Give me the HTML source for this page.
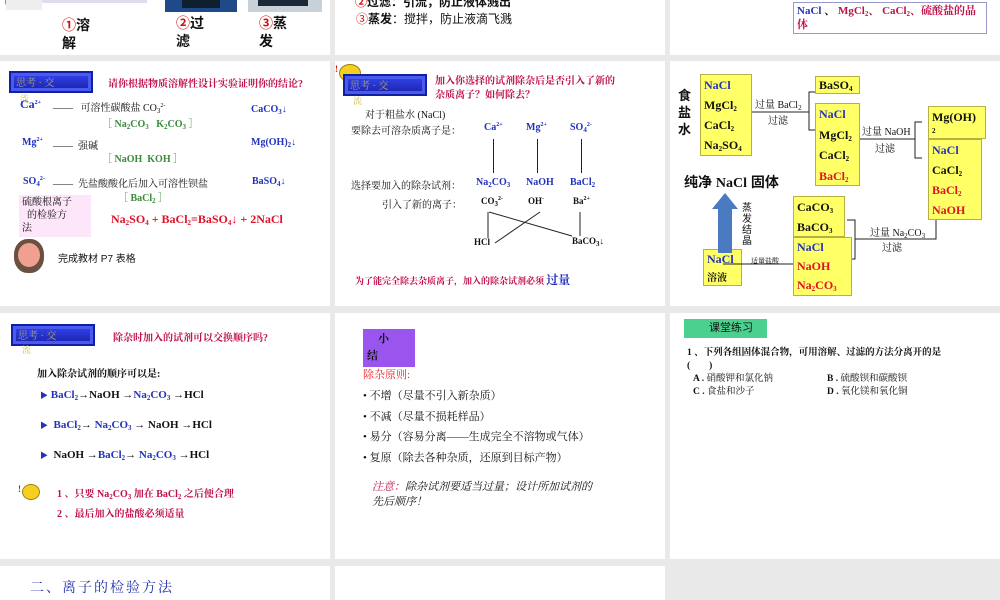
<!DOCTYPE html>
<html><head><meta charset="utf-8"><style>
*{margin:0;padding:0;box-sizing:border-box}
body{width:1000px;height:600px;background:#e9e9e9;position:relative;overflow:hidden;font-family:"Liberation Serif","Noto Serif CJK SC",serif;font-size:10px;color:#111}
.s{position:absolute;background:#fff;overflow:hidden}
.a{position:absolute;white-space:nowrap}
.b{font-weight:bold}
.bl{color:#2233bb}
.mg{color:#c0104a}
.gr{color:#3a8a3a}
.rd{color:#e0102a}
.sans{font-family:"Liberation Sans","Noto Sans CJK SC",sans-serif}
.badge{position:absolute;width:84px;height:22px;background:linear-gradient(180deg,#3344ee,#1a22aa);border:2px solid #1020a0;box-shadow:inset 0 0 0 3px #4a5af0}
.badge span{position:absolute;left:5px;top:1px;color:#c8c060;font-size:10px;opacity:.8}
.yb{position:absolute;background:#ffff66;border:1px solid #b8b040;font-weight:bold;font-size:12px;line-height:20px;padding-left:3px;overflow:hidden}
sub{font-size:7px;vertical-align:-2px;line-height:0}
sup{font-size:6px;vertical-align:4px;line-height:0}
.ln{position:absolute;background:#222}
</style></head><body>

<!-- Row1 col1 -->
<div class="s" style="left:0;top:0;width:330px;height:55px">
  <div class="a" style="left:5px;top:-6px;width:20px;height:16px;border:1px solid #888;border-radius:50%"></div>
  <div class="a" style="left:6px;top:0;width:36px;height:10px;background:#eee"></div>
  <div class="a" style="left:42px;top:0;width:105px;height:3px;background:#dde"></div>
  <div class="a" style="left:165px;top:0;width:72px;height:12px;background:#1e4a8a"></div>
  <div class="a" style="left:182px;top:0;width:38px;height:8px;background:#0e2030"></div>
  <div class="a" style="left:248px;top:0;width:74px;height:12px;background:#c8d0d8"></div>
  <div class="a" style="left:258px;top:0;width:50px;height:6px;background:#1a2838"></div>
  <div class="a b sans" style="left:62px;top:16px;font-size:14px;line-height:18px"><span style="color:#d01010">①</span>溶<br>解</div>
  <div class="a b sans" style="left:176px;top:14px;font-size:14px;line-height:18px"><span style="color:#d01010">②</span>过<br>滤</div>
  <div class="a b sans" style="left:259px;top:14px;font-size:14px;line-height:18px"><span style="color:#d01010">③</span>蒸<br>发</div>
</div>

<!-- Row1 col2 -->
<div class="s" style="left:335px;top:0;width:330px;height:55px">
  <div class="a b sans" style="left:20px;top:-7px;font-size:12px"><span style="color:#d01010">②</span>过滤：引流，防止液体溅出</div>
  <div class="a sans" style="left:21px;top:10px;font-size:12px"><span style="color:#d01010">③</span><b>蒸发</b>：搅拌，防止液滴飞溅</div>
</div>

<!-- Row1 col3 -->
<div class="s" style="left:670px;top:0;width:330px;height:55px">
  <div class="a b" style="left:123px;top:2px;width:194px;height:32px;border:1px solid #9999cc;padding:1px 3px;font-size:11px;line-height:14px;white-space:normal"><span class="bl">NaCl</span> 、 <span class="mg">MgCl<sub>2</sub>、 CaCl<sub>2</sub>、硫酸盐的晶体</span></div>
</div>

<!-- Row2 col1 -->
<div class="s" style="left:0;top:61px;width:330px;height:245px">
  <div class="badge" style="left:9px;top:10px"><span>思考 · 交</span></div>
  <div class="a" style="left:20px;top:31px;color:#d0c050;font-size:9px">流</div>
  <div class="a b mg" style="left:108px;top:14px;font-size:10px">请你根据物质溶解性设计实验证明你的结论?</div>
  <div class="a b bl" style="left:20px;top:36px;font-size:12px">Ca<sup>2+</sup></div>
  <div class="a" style="left:53px;top:38px">——&nbsp;&nbsp; 可溶性碳酸盐 CO<sub>3</sub><sup>2-</sup></div>
  <div class="a b gr" style="left:102px;top:54px">［ Na<sub>2</sub>CO<sub>3</sub>&nbsp;&nbsp; K<sub>2</sub>CO<sub>3</sub> ］</div>
  <div class="a b bl" style="left:251px;top:43px">CaCO<sub>3</sub>↓</div>
  <div class="a b bl" style="left:22px;top:76px">Mg<sup>2+</sup></div>
  <div class="a" style="left:53px;top:76px">——&nbsp; 强碱</div>
  <div class="a b gr" style="left:102px;top:89px">［ NaOH&nbsp; KOH ］</div>
  <div class="a b bl" style="left:251px;top:76px">Mg(OH)<sub>2</sub>↓</div>
  <div class="a b bl" style="left:23px;top:115px">SO<sub>4</sub><sup>2-</sup></div>
  <div class="a" style="left:53px;top:114px">——&nbsp; 先盐酸酸化后加入可溶性钡盐</div>
  <div class="a b gr" style="left:118px;top:128px">［ BaCl<sub>2</sub> ］</div>
  <div class="a b bl" style="left:252px;top:115px">BaSO<sub>4</sub>↓</div>
  <div class="a" style="left:19px;top:134px;width:72px;height:42px;background:#fde6fa;white-space:normal;line-height:13px;padding:1px 3px">硫酸根离子<br>&nbsp;&nbsp;的检验方<br>法</div>
  <div class="a b rd" style="left:111px;top:151px;font-size:12px">Na<sub>2</sub>SO<sub>4</sub> + BaCl<sub>2</sub>=BaSO<sub>4</sub>↓ + 2NaCl</div>
  <div class="a" style="left:14px;top:178px;width:30px;height:34px;border-radius:45%;background:#6a5040"></div>
  <div class="a" style="left:18px;top:182px;width:22px;height:24px;border-radius:50%;background:#f0a090"></div>
  <div class="a sans" style="left:58px;top:189px;font-size:10px">完成教材 P7 表格</div>
</div>

<!-- Row2 col2 -->
<div class="s" style="left:335px;top:61px;width:330px;height:245px">
  <div class="a" style="left:4px;top:3px;width:22px;height:18px;border-radius:50%;background:#f5d020;border:1px solid #a08010"></div>
  <div class="a b" style="left:0;top:3px;color:#d01010;font-size:9px">!</div>
  <div class="badge" style="left:8px;top:13px"><span>思考 · 交</span></div>
  <div class="a" style="left:18px;top:33px;color:#d0c050;font-size:9px">流</div>
  <div class="a b mg" style="left:100px;top:14px;line-height:14px">加入你选择的试剂除杂后是否引入了新的<br>杂质离子？如何除去？</div>
  <div class="a" style="left:30px;top:45px">对于粗盐水 (NaCl)</div>
  <div class="a" style="left:16px;top:61px">要除去可溶杂质离子是：</div>
  <div class="a b bl" style="left:149px;top:61px">Ca<sup>2+</sup></div>
  <div class="a b bl" style="left:191px;top:61px">Mg<sup>2+</sup></div>
  <div class="a b bl" style="left:235px;top:61px">SO<sub>4</sub><sup>2-</sup></div>
  <div class="ln" style="left:158px;top:78px;width:1px;height:34px"></div>
  <div class="ln" style="left:202px;top:78px;width:1px;height:34px"></div>
  <div class="ln" style="left:246px;top:78px;width:1px;height:34px"></div>
  <div class="a" style="left:16px;top:116px">选择要加入的除杂试剂：</div>
  <div class="a b bl" style="left:141px;top:116px">Na<sub>2</sub>CO<sub>3</sub></div>
  <div class="a b bl" style="left:191px;top:116px">NaOH</div>
  <div class="a b bl" style="left:235px;top:116px">BaCl<sub>2</sub></div>
  <div class="a" style="left:47px;top:135px">引入了新的离子：</div>
  <div class="a b" style="left:146px;top:135px;font-size:9px">CO<sub>3</sub><sup>2-</sup></div>
  <div class="a b" style="left:193px;top:135px;font-size:9px">OH<sup>-</sup></div>
  <div class="a b" style="left:238px;top:135px;font-size:9px">Ba<sup>2+</sup></div>
  <svg class="a" style="left:0;top:0" width="330" height="245"><g stroke="#222" stroke-width="1" fill="none">
    <line x1="153" y1="151" x2="153" y2="177"/><line x1="154" y1="151" x2="237" y2="175"/>
    <line x1="205" y1="151" x2="160" y2="182"/><line x1="245" y1="151" x2="245" y2="175"/></g></svg>
  <div class="a b" style="left:139px;top:176px;font-size:9px">HCl</div>
  <div class="a b" style="left:237px;top:175px;font-size:9px">BaCO<sub>3</sub>↓</div>
  <div class="a b mg" style="left:20px;top:210px;font-size:9px">为了能完全除去杂质离子，加入的除杂试剂必须 <span class="bl" style="font-size:12px">过量</span></div>
</div>

<!-- Row2 col3 -->
<div class="s" style="left:670px;top:61px;width:330px;height:245px">
  <div class="a b sans" style="left:8px;top:26px;font-size:13px;line-height:17px;white-space:normal;width:14px">食盐水</div>
  <div class="yb" style="left:30px;top:13px;width:52px;height:82px;line-height:20px"><span class="bl">NaCl</span><br>MgCl<sub>2</sub><br>CaCl<sub>2</sub><br>Na<sub>2</sub>SO<sub>4</sub></div>
  <div class="yb" style="left:145px;top:15px;width:45px;height:18px;line-height:16px">BaSO<sub>4</sub></div>
  <div class="yb" style="left:145px;top:42px;width:45px;height:83px;line-height:20.5px"><span class="bl">NaCl</span><br>MgCl<sub>2</sub><br>CaCl<sub>2</sub><br><span class="rd">BaCl<sub>2</sub></span></div>
  <div class="yb" style="left:258px;top:45px;width:58px;height:33px;line-height:20px">Mg(OH)<br><span style="font-size:7px;line-height:8px;vertical-align:top">2</span></div>
  <div class="yb" style="left:258px;top:78px;width:54px;height:81px;line-height:20px"><span class="bl">NaCl</span><br>CaCl<sub>2</sub><br><span class="rd">BaCl<sub>2</sub></span><br><span class="rd">NaOH</span></div>
  <div class="yb" style="left:123px;top:135px;width:52px;height:41px;line-height:20px">CaCO<sub>3</sub><br>BaCO<sub>3</sub></div>
  <div class="yb" style="left:123px;top:176px;width:59px;height:59px;line-height:19px"><span class="bl">NaCl</span><br><span class="rd">NaOH</span><br><span class="rd">Na<sub>2</sub>CO<sub>3</sub></span></div>
  <div class="yb" style="left:33px;top:188px;width:39px;height:37px;line-height:18px"><span class="bl">NaCl</span><br><span style="font-size:10px">溶液</span></div>
  <div class="a b sans" style="left:14px;top:111px;font-size:14px">纯净 <span style="font-family:'Liberation Serif',serif">NaCl</span> 固体</div>
  <svg class="a" style="left:0;top:0" width="330" height="245"><g stroke="#222" stroke-width="1" fill="none">
    <polyline points="82,51 139,51"/><polyline points="145,31 139,31 139,69 145,69"/>
    <polyline points="190,78 245,78"/><polyline points="252,61 245,61 245,97 252,97"/>
    <polyline points="266,159 266,178 185,178"/><polyline points="177,159 185,159 185,198 182,198"/>
    <polyline points="123,203 53,203"/></g>
    <path d="M48,192 V148 H42 L55,132 L68,148 H62 V192 Z" fill="#4a7ac0"/>
  </svg>
  <div class="a" style="left:85px;top:35px;font-size:10px">过量 BaCl<sub>2</sub></div>
  <div class="a" style="left:98px;top:51px;font-size:10px">过滤</div>
  <div class="a" style="left:192px;top:62px;font-size:10px">过量 NaOH</div>
  <div class="a" style="left:205px;top:79px;font-size:10px">过滤</div>
  <div class="a" style="left:200px;top:163px;font-size:10px">过量 Na<sub>2</sub>CO<sub>3</sub></div>
  <div class="a" style="left:212px;top:178px;font-size:10px">过滤</div>
  <div class="a" style="left:81px;top:195px;font-size:7px">适量盐酸</div>
  <div class="a sans" style="left:72px;top:142px;font-size:10px;line-height:11px;width:10px;white-space:normal">蒸发结晶</div>
</div>

<!-- Row3 col1 -->
<div class="s" style="left:0;top:313px;width:330px;height:246px">
  <div class="badge" style="left:11px;top:11px"><span>思考 · 交</span></div>
  <div class="a" style="left:22px;top:30px;color:#d0c050;font-size:9px">流</div>
  <div class="a b mg" style="left:113px;top:16px;font-size:10px">除杂时加入的试剂可以交换顺序吗?</div>
  <div class="a b" style="left:37px;top:52px">加入除杂试剂的顺序可以是:</div>
  <div class="a b" style="left:40px;top:76px;font-size:11px"><span class="bl" style="font-size:8px">▶</span> <span class="bl">BaCl<sub>2</sub></span>→NaOH →<span class="bl">Na<sub>2</sub>CO<sub>3</sub></span> →HCl</div>
  <div class="a b" style="left:40px;top:106px;font-size:11px"><span class="bl" style="font-size:8px">▶</span>&nbsp; <span class="bl">BaCl<sub>2</sub></span>→ <span class="bl">Na<sub>2</sub>CO<sub>3</sub></span> → NaOH →HCl</div>
  <div class="a b" style="left:40px;top:136px;font-size:11px"><span class="bl" style="font-size:8px">▶</span>&nbsp; NaOH →<span class="bl">BaCl<sub>2</sub></span>→ <span class="bl">Na<sub>2</sub>CO<sub>3</sub></span> →HCl</div>
  <div class="a" style="left:22px;top:171px;width:18px;height:16px;border-radius:50%;background:#f5d020;border:1px solid #a08010"></div>
  <div class="a b" style="left:18px;top:171px;color:#d01010;font-size:9px">!</div>
  <div class="a b mg" style="left:57px;top:172px;line-height:20px">1 、只要 Na<sub>2</sub>CO<sub>3</sub> 加在 BaCl<sub>2</sub> 之后便合理<br>2 、最后加入的盐酸必须适量</div>
</div>

<!-- Row3 col2 -->
<div class="s" style="left:335px;top:313px;width:330px;height:246px">
  <div class="a b" style="left:28px;top:16px;width:52px;height:38px;background:#9955ee;line-height:17px;padding:2px 4px;font-size:11px">&nbsp;&nbsp;&nbsp;&nbsp;小<br>结</div>
  <div class="a" style="left:28px;top:53px;color:#ee2222;font-size:11px">除杂原则:</div>
  <div class="a" style="left:28px;top:73px;line-height:20.5px;font-size:11px">• 不增（尽量不引入新杂质）<br>• 不减（尽量不损耗样品）<br>• 易分（容易分离——生成完全不溶物或气体）<br>• 复原（除去各种杂质，还原到目标产物）</div>
  <div class="a" style="left:37px;top:167px;font-style:italic;font-size:11px;line-height:15px"><span class="mg">注意：</span>除杂试剂要适当过量；设计所加试剂的<br>先后顺序！</div>
</div>

<!-- Row3 col3 -->
<div class="s" style="left:670px;top:313px;width:330px;height:246px">
  <div class="a sans" style="left:14px;top:6px;width:83px;height:19px;background:#4cd090;font-size:11px;line-height:19px;padding-left:25px">课堂练习</div>
  <div class="a b" style="left:17px;top:34px;font-size:9.5px;line-height:13px">1 、下列各组固体混合物，可用溶解、过滤的方法分离开的是<br>(&nbsp;&nbsp;&nbsp;&nbsp;&nbsp;&nbsp;&nbsp;&nbsp;)</div>
  <div class="a" style="left:23px;top:60px;font-size:9.5px;line-height:13px"><b>A .</b> 硝酸钾和氯化钠<br><b>C .</b> 食盐和沙子</div>
  <div class="a" style="left:157px;top:60px;font-size:9.5px;line-height:13px"><b>B .</b> 硫酸钡和碳酸钡<br><b>D .</b> 氧化镁和氧化铜</div>
</div>

<!-- Row4 -->
<div class="s" style="left:0;top:566px;width:330px;height:34px">
  <div class="a" style="left:30px;top:11px;font-size:14px;color:#2233aa;letter-spacing:2px">二、离子的检验方法</div>
</div>
<div class="s" style="left:335px;top:566px;width:330px;height:34px"></div>
</body></html>
